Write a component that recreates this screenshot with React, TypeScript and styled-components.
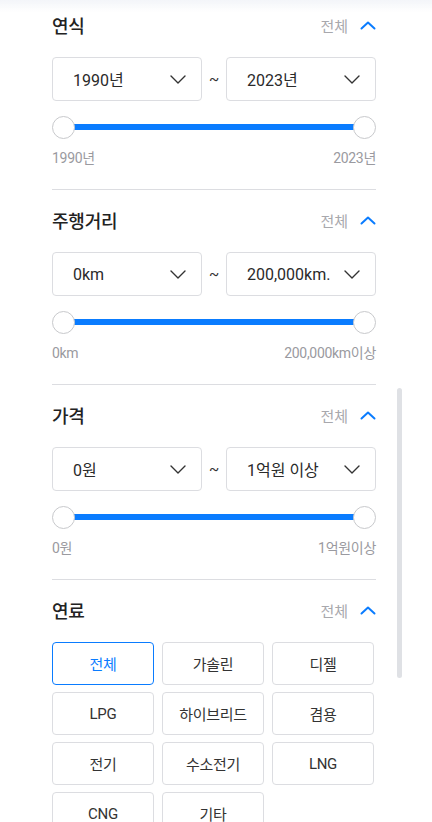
import styled, { createGlobalStyle } from 'styled-components'

const GlobalStyle = createGlobalStyle`
  * { box-sizing: border-box; }
  html, body { margin: 0; padding: 0; background: #ffffff; }
  body {
    font-family: Roboto, 'Noto Sans CJK KR', 'Noto Sans', sans-serif;
    color: #222222;
    overflow: hidden;
  }
`

type RangeFilter = {
  title: string
  from: string
  to: string
  min: string
  max: string
}

const ranges: RangeFilter[] = [
  { title: '연식', from: '1990년', to: '2023년', min: '1990년', max: '2023년' },
  { title: '주행거리', from: '0km', to: '200,000km.', min: '0km', max: '200,000km이상' },
  { title: '가격', from: '0원', to: '1억원 이상', min: '0원', max: '1억원이상' },
]

const fuels = ['전체', '가솔린', '디젤', 'LPG', '하이브리드', '겸용', '전기', '수소전기', 'LNG', 'CNG', '기타']

function ChevronDown() {
  return (
    <svg width="16" height="9" viewBox="0 0 16 9" fill="none">
      <path d="M1 1l7 7 7-7" stroke="#333" strokeWidth="1.4" strokeLinecap="round" strokeLinejoin="round" />
    </svg>
  )
}

function ChevronUp() {
  return (
    <svg width="16" height="9" viewBox="0 0 16 9" fill="none">
      <path d="M1.5 7.5L8 1.5l6.5 6" stroke="#0a7cff" strokeWidth="2" strokeLinecap="round" strokeLinejoin="round" />
    </svg>
  )
}

function Header({ title }: { title: string }) {
  return (
    <HeaderRow>
      <Title>{title}</Title>
      <Toggle>
        <span>전체</span>
        <ChevronUp />
      </Toggle>
    </HeaderRow>
  )
}

export default function App() {
  return (
    <>
      <GlobalStyle />
      <TopFade />
      <Page>
        {ranges.map((r, i) => (
          <Section key={r.title} $first={i === 0}>
            <Header title={r.title} />
            <SelectRow>
              <Select>
                <SelectText>{r.from}</SelectText>
                <ChevronDown />
              </Select>
              <Tilde>~</Tilde>
              <Select>
                <SelectText>{r.to}</SelectText>
                <ChevronDown />
              </Select>
            </SelectRow>
            <Slider>
              <Track />
              <Thumb />
              <Thumb />
            </Slider>
            <Labels>
              <span>{r.min}</span>
              <span>{r.max}</span>
            </Labels>
          </Section>
        ))}
        <Section $last>
          <Header title="연료" />
          <FuelGrid>
            {fuels.map((f, i) => (
              <FuelButton key={f} $active={i === 0}>
                {f}
              </FuelButton>
            ))}
          </FuelGrid>
        </Section>
      </Page>
      <ScrollThumb />
    </>
  )
}

const TopFade = styled.div`
  position: fixed;
  top: 0;
  left: 0;
  right: 0;
  height: 12px;
  background: linear-gradient(#f3f5f9, rgba(255, 255, 255, 0));
  pointer-events: none;
  z-index: 2;
`

const Page = styled.div`
  width: 324px;
  margin-left: 52px;
`

const Section = styled.section<{ $first?: boolean; $last?: boolean }>`
  padding: ${({ $first }) => ($first ? '13px' : '18px')} 0 22px;
  border-bottom: ${({ $last }) => ($last ? 'none' : '1px solid #dcdde1')};
`

const HeaderRow = styled.div`
  display: flex;
  align-items: center;
  justify-content: space-between;
  height: 24px;
  margin-bottom: 20px;
`

const Title = styled.h3`
  margin: 0;
  font-size: 18px;
  font-weight: 500;
  color: #222222;
  letter-spacing: -0.2px;
`

const Toggle = styled.div`
  display: flex;
  align-items: center;
  gap: 12px;
  font-size: 15px;
  color: #a8a8ad;
`

const SelectRow = styled.div`
  display: flex;
  align-items: center;
  justify-content: space-between;
`

const Select = styled.div`
  display: flex;
  align-items: center;
  justify-content: space-between;
  width: 150px;
  height: 44px;
  padding: 0 15px 0 20px;
  border: 1px solid #dcdde1;
  border-radius: 4px;
  background: #ffffff;
`

const SelectText = styled.span`
  font-size: 16px;
  color: #2a2a2a;
  white-space: nowrap;
`

const Tilde = styled.span`
  font-size: 15px;
  color: #333333;
`

const Slider = styled.div`
  position: relative;
  display: flex;
  align-items: center;
  justify-content: space-between;
  height: 22px;
  margin-top: 15px;
`

const Track = styled.div`
  position: absolute;
  left: 11px;
  right: 11px;
  top: 8px;
  height: 6px;
  background: #0a7cff;
`

const Thumb = styled.div`
  position: relative;
  width: 23px;
  height: 23px;
  border-radius: 50%;
  background: #ffffff;
  border: 1px solid #c8c9cc;
`

const Labels = styled.div`
  display: flex;
  justify-content: space-between;
  height: 18px;
  margin-top: 11px;
  font-size: 14px;
  line-height: 18px;
  color: #9a9aa0;
  letter-spacing: -0.3px;
`

const FuelGrid = styled.div`
  display: grid;
  grid-template-columns: repeat(3, 102px);
  column-gap: 8px;
  row-gap: 7px;
`

const FuelButton = styled.button<{ $active?: boolean }>`
  height: 43px;
  padding: 0;
  border-radius: 4px;
  background: #ffffff;
  font-family: inherit;
  font-size: 15px;
  letter-spacing: -0.3px;
  border: 1px solid ${({ $active }) => ($active ? '#0a7cff' : '#dcdde1')};
  color: ${({ $active }) => ($active ? '#0a7cff' : '#333333')};
`

const ScrollThumb = styled.div`
  position: fixed;
  left: 397px;
  top: 388px;
  width: 5px;
  height: 290px;
  border-radius: 3px;
  background: #dfe1e5;
`
